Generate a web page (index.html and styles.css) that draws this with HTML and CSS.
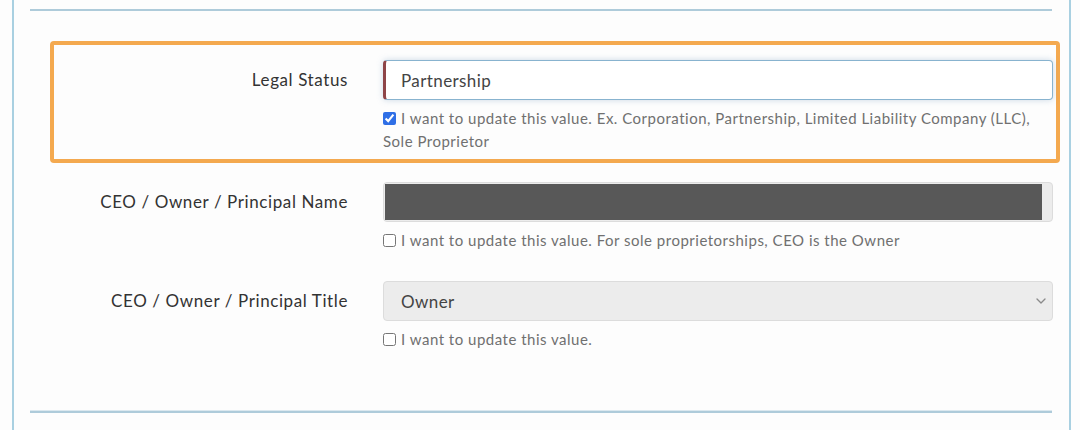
FILE: index.html
```html
<!DOCTYPE html>
<html>
<head>
<meta charset="utf-8">
<link rel="stylesheet" href="styles.css">
</head>
<body>
<div class="panel">
  <div class="rule rule-top"></div>
  <div class="fields">
    <div class="row row-highlight">
      <div class="label">Legal Status</div>
      <div class="control">
        <div class="input input-focus">Partnership</div>
        <div class="help"><input type="checkbox" class="cb" checked>I want to update this value. Ex. Corporation, Partnership, Limited Liability Company (LLC), Sole Proprietor</div>
      </div>
    </div>
    <div class="row">
      <div class="label">CEO / Owner / Principal Name</div>
      <div class="control">
        <div class="input input-disabled"><div class="redact"></div></div>
        <div class="help"><input type="checkbox" class="cb">I want to update this value. For sole proprietorships, CEO is the Owner</div>
      </div>
    </div>
    <div class="row">
      <div class="label">CEO / Owner / Principal Title</div>
      <div class="control">
        <div class="input input-select"><span>Owner</span>
          <svg class="chev" width="10" height="6" viewBox="0 0 10 6"><path d="M1 1l4 4 4-4" fill="none" stroke="#8a8a8a" stroke-width="1.3" stroke-linecap="round" stroke-linejoin="round"/></svg>
        </div>
        <div class="help"><input type="checkbox" class="cb">I want to update this value.</div>
      </div>
    </div>
  </div>
  <div class="rule rule-bottom"></div>
</div>
</body>
</html>
```

FILE: styles.css
```css
html, body {
  margin: 0;
  padding: 0;
  background: #fdfdfd;
}
body {
  font-family: Lato, "Open Sans", sans-serif;
  color: #333;
}
.panel {
  margin-left: 12px;
  width: 1055px;
  height: 430px;
  border-left: 2px solid #a9d0e1;
  border-right: 2px solid #a9d0e1;
  box-sizing: content-box;
  padding-top: 9px;
}
.rule {
  height: 2px;
  background: #aecbda;
  margin: 0 17px 0 16px;
}
.rule-top {
  margin-bottom: 30px;
}
.rule-bottom {
  margin-top: 49px;
  border-top: 1px solid #dbe8ef;
}
.fields {
  display: flex;
  flex-direction: column;
}
.row {
  margin: 0 9px 0 36px;
  border: 4px solid transparent;
  border-radius: 4px;
  padding: 15px 3px 6px 0;
  display: grid;
  grid-template-columns: 294px 670px;
  column-gap: 35px;
}
.row-highlight {
  border-color: #f4a94f;
}
.label {
  text-align: right;
  font-size: 17px;
  letter-spacing: 0.6px;
  line-height: 40px;
  height: 40px;
  color: #333;
}
.input {
  height: 40px;
  box-sizing: border-box;
  border-radius: 4px;
  font-size: 17px;
  letter-spacing: 0.4px;
  color: #444;
  display: flex;
  align-items: center;
}
.input-focus {
  background: #fff;
  border: 1px solid #88b3cf;
  border-left: 3px solid #8e4548;
  padding-left: 15px;
  box-shadow: 0 0 6px rgba(110, 150, 185, 0.35);
}
.input-disabled {
  background: #ececec;
  border: 1px solid #dcdcdc;
  padding: 1px 10px 1px 1px;
}
.redact {
  flex: 1;
  height: 100%;
  background: #585858;
}
.input-select {
  background: #ececec;
  border: 1px solid #dcdcdc;
  padding: 0 6px 0 17px;
  justify-content: space-between;
}
.help {
  margin-top: 7px;
  font-size: 15px;
  letter-spacing: 0.5px;
  line-height: 23px;
  color: #707070;
}
.cb {
  width: 13px;
  height: 13px;
  margin: 0 5px 0 0;
  vertical-align: -1px;
  accent-color: #2f6fe6;
}
```
